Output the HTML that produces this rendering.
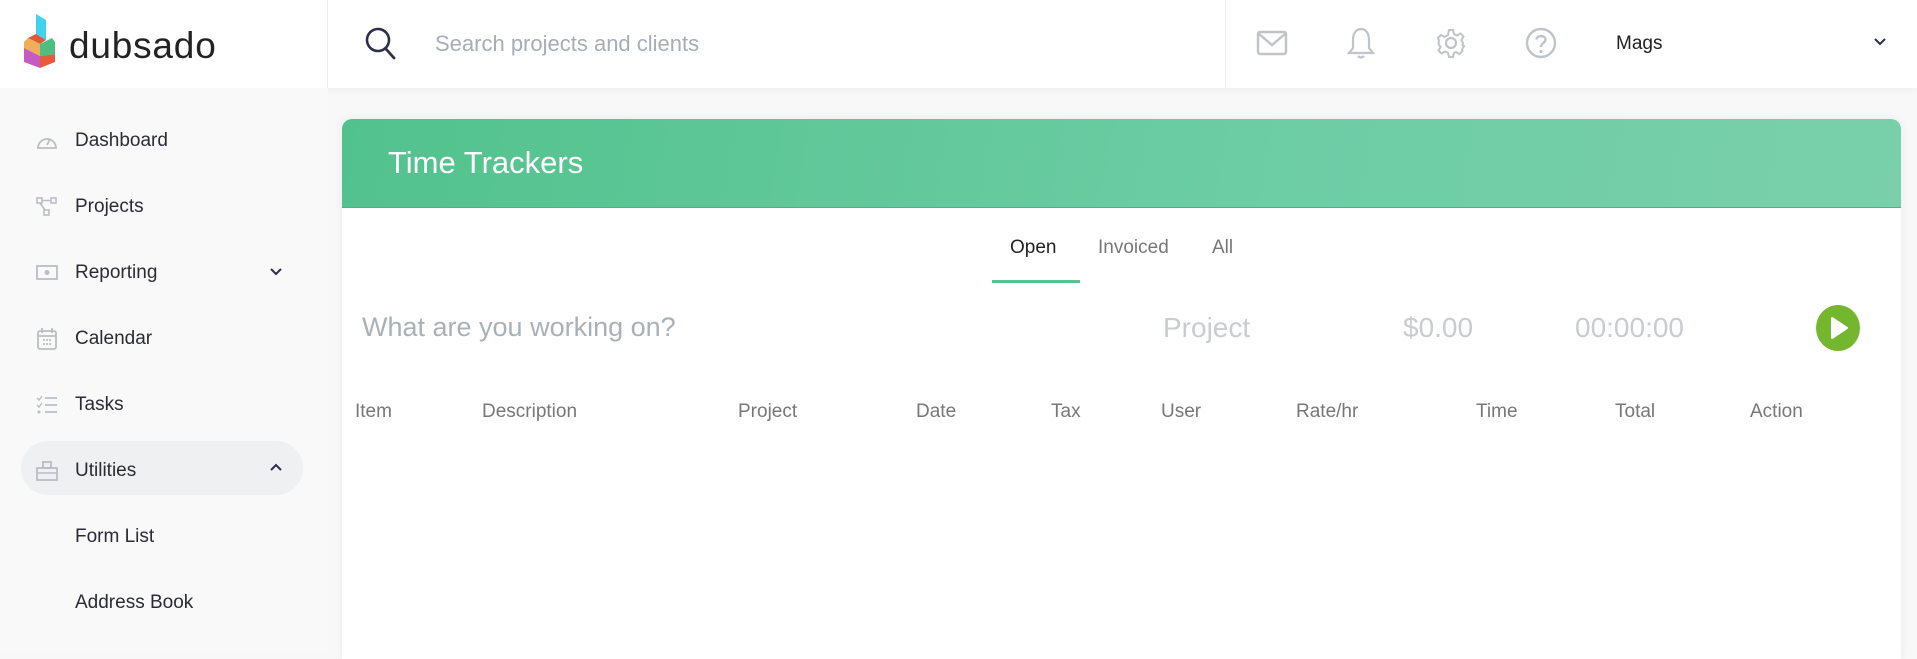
<!DOCTYPE html>
<html><head><meta charset="utf-8"><style>
*{margin:0;padding:0;box-sizing:border-box}
body{width:1917px;height:652px;overflow:hidden;background:#f8f8f9;font-family:"Liberation Sans",sans-serif;position:relative}
.hdr{position:absolute;left:0;top:0;width:1917px;height:88px;background:#fff;box-shadow:0 2px 8px rgba(0,0,0,.04)}
.abs{position:absolute}
.side{position:absolute;left:0;top:88px;width:328px;height:564px;background:#f9f9fa}
.nav{position:absolute;left:75px;font-size:19px;color:#2b2b35;transform:translateY(-50%)}
.ic{position:absolute;left:36px;transform:translateY(-50%)}
.card{position:absolute;left:342px;top:119px;width:1559px;height:540px;background:#fff;border-radius:10px 10px 0 0;box-shadow:0 0 10px rgba(0,0,0,.06);overflow:hidden}
.gh{height:89px;background:linear-gradient(100deg,#52c28d,#6dcda5 60%,#79d0aa);border-bottom:1px solid #5aa98a}
.col{position:absolute;top:412px;font-size:19px;color:#777;transform:translateY(-50%)}
.g{color:#c9cdd0}
</style></head><body>
<div class="hdr">
  <svg class="abs" style="left:24px;top:14px" width="32" height="54" viewBox="0 0 32 54">
    <polygon points="12,0 22,6 22,26 12,20" fill="#3fd3ee"/>
    <polygon points="12,20 22,26 16,30 4,24" fill="#e05a3a"/>
    <polygon points="4,24 16,30 16,42 0,34 0,28" fill="#f0ad5a"/>
    <polygon points="16,30 28,24 31,28 31,40 16,42" fill="#4bbf7f"/>
    <polygon points="0,34 16,42 16,54 0,48" fill="#c55bc0"/>
    <polygon points="16,42 31,40 31,48 16,54" fill="#e85a3a"/>
  </svg>
  <div class="abs" style="left:69px;top:25px;font-size:37px;color:#222;letter-spacing:.8px">dubsado</div>
  <div class="abs" style="left:327px;top:0;width:1px;height:88px;background:#eee"></div>
  <svg class="abs" style="left:365px;top:27px" width="32" height="34" viewBox="0 0 32 34"><circle cx="13" cy="13" r="11" fill="none" stroke="#2d2f4a" stroke-width="2.6"/><line x1="21" y1="22" x2="29" y2="31" stroke="#2d2f4a" stroke-width="2.8" stroke-linecap="round"/></svg>
  <div class="abs" style="left:435px;top:31px;font-size:22px;color:#a5adb6">Search projects and clients</div>
  <div class="abs" style="left:1225px;top:0;width:1px;height:88px;background:#eee"></div>
  <svg class="abs" style="left:1256px;top:29px" width="32" height="28" viewBox="0 0 32 28"><rect x="2" y="3" width="28" height="22" rx="2" fill="none" stroke="#bfc4cb" stroke-width="2.4"/><path d="M3 5 L16 16 L29 5" fill="none" stroke="#bfc4cb" stroke-width="2.4"/></svg>
  <svg class="abs" style="left:1347px;top:26px" width="28" height="34" viewBox="0 0 28 34"><path d="M14 3 C8 3 6 9 6 14 L6 22 L2 27 L26 27 L22 22 L22 14 C22 9 20 3 14 3Z" fill="none" stroke="#bfc4cb" stroke-width="2.2"/><path d="M11 30 Q14 33 17 30" fill="none" stroke="#bfc4cb" stroke-width="2.2"/></svg>
  <svg class="abs" style="left:1436px;top:28px" width="30" height="30" viewBox="0 0 30 30"><circle cx="15" cy="15" r="5" fill="none" stroke="#bfc4cb" stroke-width="2.2"/><path d="M13 2h4l1 4 3 1.5 3.5-2 3 3-2 3.5L27 15l-.5 2 1.5 1-2 3.5 .5 1.5-3 3-3.5-2L18 25l-1 4h-4l-1-4-3-1.5-3.5 2-3-3 2-3.5L3 17l-.5-2L3 13l-1-3 3-3 3.5 2L12 7z" fill="none" stroke="#bfc4cb" stroke-width="2"/></svg>
  <svg class="abs" style="left:1525px;top:27px" width="32" height="32" viewBox="0 0 32 32"><circle cx="16" cy="16" r="14" fill="none" stroke="#bfc4cb" stroke-width="2.4"/><path d="M11.5 12.5 C11.5 8 20.5 8 20.5 12.5 C20.5 16 16 16 16 20" fill="none" stroke="#bfc4cb" stroke-width="2.4"/><circle cx="16" cy="24.5" r="1.6" fill="#bfc4cb"/></svg>
  <div class="abs" style="left:1616px;top:33px;font-size:19px;color:#222">Mags</div>
  <svg class="abs" style="left:1873px;top:37px" width="14" height="10" viewBox="0 0 14 10"><path d="M2 2 L7 7 L12 2" fill="none" stroke="#2d2f4a" stroke-width="2"/></svg>
</div>

<div class="side">
  <div class="abs" style="left:21px;top:353px;width:282px;height:54px;border-radius:27px;background:#eef0f2"></div>
</div>
<svg class="ic" style="top:141px" width="22" height="20" viewBox="0 0 22 20"><path d="M2 17 A9 9 0 1 1 20 17 Z" fill="none" stroke="#b9bec5" stroke-width="1.8"/><line x1="11" y1="14" x2="14" y2="8" stroke="#b9bec5" stroke-width="1.8"/></svg>
<div class="nav" style="top:141px">Dashboard</div>
<svg class="ic" style="top:207px" width="22" height="20" viewBox="0 0 22 20"><rect x="1" y="1" width="5" height="5" fill="none" stroke="#b9bec5" stroke-width="1.6"/><rect x="15" y="1" width="5" height="5" fill="none" stroke="#b9bec5" stroke-width="1.6"/><rect x="8" y="13" width="5" height="5" fill="none" stroke="#b9bec5" stroke-width="1.6"/><path d="M6 3.5H15 M4 6 L9 13" stroke="#b9bec5" stroke-width="1.6" fill="none"/></svg>
<div class="nav" style="top:207px">Projects</div>
<svg class="ic" style="top:273px" width="22" height="18" viewBox="0 0 22 18"><rect x="1" y="2" width="20" height="13" fill="none" stroke="#b9bec5" stroke-width="1.8"/><circle cx="11" cy="8.5" r="2.5" fill="#b9bec5"/></svg>
<div class="nav" style="top:273px">Reporting</div>
<svg class="abs" style="left:269px;top:267px" width="14" height="10" viewBox="0 0 14 10"><path d="M2 2 L7 7 L12 2" fill="none" stroke="#2d2f4a" stroke-width="2"/></svg>
<svg class="ic" style="top:339px" width="22" height="24" viewBox="0 0 22 24"><rect x="2" y="4" width="18" height="18" rx="2" fill="none" stroke="#b9bec5" stroke-width="1.8"/><path d="M6 1v5M16 1v5M2 9h18" stroke="#b9bec5" stroke-width="1.8"/><path d="M7 13h2M10 13h2M13 13h2M7 17h2M10 17h2M13 17h2" stroke="#b9bec5" stroke-width="1.8"/></svg>
<div class="nav" style="top:339px">Calendar</div>
<svg class="ic" style="top:405px" width="22" height="20" viewBox="0 0 22 20"><path d="M1 3l2 2 3-4M1 10l2 2 3-4" fill="none" stroke="#b9bec5" stroke-width="1.4"/><circle cx="3" cy="17" r="1.5" fill="#b9bec5"/><path d="M9 3h12M9 10h12M9 17h12" stroke="#b9bec5" stroke-width="1.8"/></svg>
<div class="nav" style="top:405px">Tasks</div>
<svg class="ic" style="top:471px" width="22" height="22" viewBox="0 0 22 22"><rect x="1" y="8" width="20" height="12" fill="none" stroke="#b9bec5" stroke-width="1.8"/><rect x="7" y="2" width="8" height="6" fill="none" stroke="#b9bec5" stroke-width="1.8"/><path d="M1 13h20" stroke="#b9bec5" stroke-width="1.6"/></svg>
<div class="nav" style="top:471px">Utilities</div>
<svg class="abs" style="left:269px;top:462px" width="14" height="10" viewBox="0 0 14 10"><path d="M2 8 L7 3 L12 8" fill="none" stroke="#2d2f4a" stroke-width="2"/></svg>
<div class="nav" style="top:537px">Form List</div>
<div class="nav" style="top:603px">Address Book</div>

<div class="card"><div class="gh"></div></div>
<div class="abs" style="left:388px;top:145px;font-size:31px;color:#fff">Time Trackers</div>
<div class="abs" style="left:1010px;top:237px;font-size:19px;color:#222">Open</div>
<div class="abs" style="left:1098px;top:237px;font-size:19px;color:#777">Invoiced</div>
<div class="abs" style="left:1212px;top:237px;font-size:19px;color:#777">All</div>
<div class="abs" style="left:992px;top:280px;width:88px;height:3px;background:#55c38f"></div>
<div class="abs" style="left:362px;top:312px;font-size:27px;color:#a9b1b8">What are you working on?</div>
<div class="abs g" style="left:1163px;top:312px;font-size:28px">Project</div>
<div class="abs g" style="left:1403px;top:312px;font-size:28px">$0.00</div>
<div class="abs g" style="left:1575px;top:312px;font-size:28px">00:00:00</div>
<svg class="abs" style="left:1815px;top:305px" width="46" height="46" viewBox="0 0 46 46"><ellipse cx="23" cy="23" rx="22" ry="23" fill="#74b72e"/><path d="M17 13 L32 23 L17 33 Z" fill="#fff" stroke="#fff" stroke-width="2" stroke-linejoin="round"/></svg>
<div class="col" style="left:355px">Item</div>
<div class="col" style="left:482px">Description</div>
<div class="col" style="left:738px">Project</div>
<div class="col" style="left:916px">Date</div>
<div class="col" style="left:1051px">Tax</div>
<div class="col" style="left:1161px">User</div>
<div class="col" style="left:1296px">Rate/hr</div>
<div class="col" style="left:1476px">Time</div>
<div class="col" style="left:1615px">Total</div>
<div class="col" style="left:1750px">Action</div>
</body></html>
